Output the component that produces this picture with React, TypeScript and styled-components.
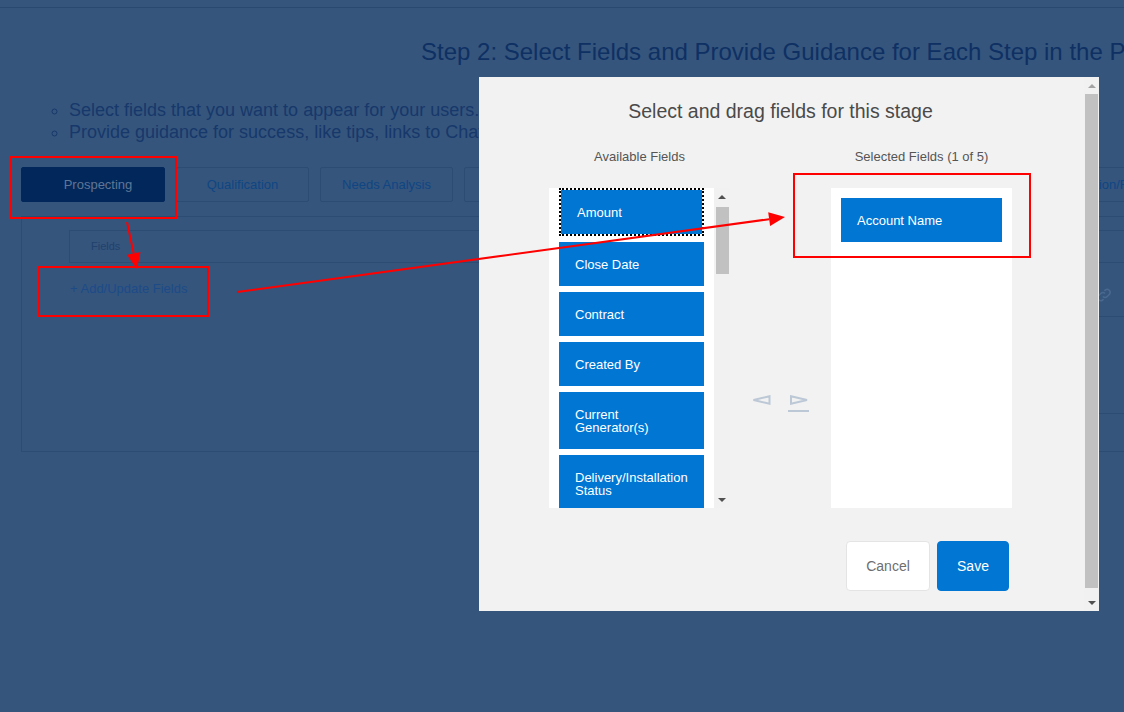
import React from 'react';
import styled, { createGlobalStyle } from 'styled-components';

const GlobalStyle = createGlobalStyle`
  html, body {
    margin: 0;
    padding: 0;
  }
  body {
    width: 1124px;
    height: 712px;
    overflow: hidden;
    background: #35557d;
    font-family: 'Liberation Sans', Arial, sans-serif;
  }
`;

const Page = styled.div`
  position: relative;
  width: 1124px;
  height: 712px;
  overflow: hidden;
  background: #35557d;
`;

const TopBar = styled.div`
  height: 7px;
  border-bottom: 1px solid #2a4970;
`;

const Heading = styled.h2`
  margin: 30px 0 0;
  padding-left: 421px;
  font-size: 24px;
  line-height: 28px;
  font-weight: normal;
  color: #0e3063;
  white-space: nowrap;
`;

const Bullets = styled.ul`
  margin: 33px 0 0;
  padding-left: 69px;
  list-style: circle;
  font-size: 18px;
  line-height: 22px;
  color: #17386a;
  white-space: nowrap;
`;

const Tabs = styled.div`
  display: flex;
  gap: 11px;
  margin-top: 24px;
  padding-left: 21px;
`;

const Tab = styled.div<{ $active?: boolean }>`
  flex: 0 0 auto;
  box-sizing: border-box;
  width: ${p => (p.$active ? 144 : 133)}px;
  height: 35px;
  padding-left: ${p => (p.$active ? 10 : 0)}px;
  display: flex;
  align-items: center;
  justify-content: center;
  border-radius: 2px;
  border: 1px solid ${p => (p.$active ? '#02285b' : '#2d4c74')};
  background: ${p => (p.$active ? '#02285b' : 'transparent')};
  color: ${p => (p.$active ? '#5f7696' : '#0f4683')};
  font-size: 13px;
  white-space: nowrap;
`;

const Panel = styled.div`
  box-sizing: border-box;
  width: 1240px;
  height: 236px;
  margin: 14px 0 0 21px;
  padding: 13px 0 0 47px;
  border: 1px solid #2d4c74;
`;

const FieldsHeader = styled.div`
  box-sizing: border-box;
  height: 33px;
  padding-left: 21px;
  border: 1px solid #2d4c74;
  font-size: 11px;
  line-height: 31px;
  color: #22416c;
`;

const FieldsRow = styled.div`
  display: flex;
`;

const AddLink = styled.div`
  flex: 0 0 1026px;
  margin-top: 18px;
  padding-left: 1px;
  font-size: 13px;
  line-height: 16px;
  color: #1c4b88;
`;

const SideColumn = styled.div`
  flex: 1;
  display: flex;
  flex-direction: column;
`;

const ToolRow = styled.div`
  height: 53px;
  border-bottom: 1px solid #2d4c74;
`;

const ToolButton = styled.div`
  width: 24px;
  height: 38px;
  margin-top: 13px;
  display: flex;
  align-items: center;
  color: #4a6890;
`;

const GuidanceBlock = styled.div`
  height: 96px;
  border-bottom: 1px solid #2d4c74;
`;

/* modal */

const Modal = styled.div`
  position: absolute;
  left: 479px;
  top: 77px;
  width: 620px;
  height: 534px;
  display: flex;
  background: #f2f2f2;
`;

const ModalBody = styled.div`
  flex: 1;
  display: flex;
  flex-direction: column;
  align-items: center;
  padding: 22px 2px 0 0;
`;

const ModalTitle = styled.div`
  font-size: 19.5px;
  line-height: 24px;
  color: #4a4a4a;
`;

const Columns = styled.div`
  display: flex;
  margin-top: 26px;
`;

const Column = styled.div`
  width: 181px;
  display: flex;
  flex-direction: column;
`;

const ColumnTitle = styled.div`
  height: 16px;
  margin-bottom: 23px;
  font-size: 13px;
  line-height: 16px;
  text-align: center;
  color: #555;
  white-space: nowrap;
`;

const ListFrame = styled.div`
  display: flex;
  height: 320px;
`;

const ListBox = styled.div<{ $pad: number }>`
  flex: 1;
  box-sizing: border-box;
  padding: ${p => p.$pad}px 10px 0;
  background: #fff;
  overflow: hidden;
`;

const FieldItem = styled.div<{ $focused?: boolean }>`
  box-sizing: border-box;
  width: 100%;
  margin-bottom: 6px;
  padding: 15.5px 10px 15.5px 16px;
  background: #0176d3;
  background-clip: padding-box;
  border: ${p => (p.$focused ? '2px dotted #000' : '0')};
  color: #fff;
  font-size: 13px;
  line-height: 13px;
`;

const Track = styled.div<{ $width: number }>`
  flex: 0 0 ${p => p.$width}px;
  display: flex;
  flex-direction: column;
  align-items: center;
  background: #f1f1f1;
`;

const ArrowCell = styled.div`
  height: 17px;
  width: 100%;
  display: flex;
  align-items: center;
  justify-content: center;
`;

const Triangle = styled.div<{ $down?: boolean; $color: string }>`
  width: 0;
  height: 0;
  border-left: 4px solid transparent;
  border-right: 4px solid transparent;
  ${p =>
    p.$down
      ? `border-top: 4px solid ${p.$color};`
      : `border-bottom: 4px solid ${p.$color};`}
`;

const Thumb = styled.div<{ $offset: number; $height: number }>`
  width: 13px;
  height: ${p => p.$height}px;
  margin-top: ${p => p.$offset}px;
  background: #c1c1c1;
`;

const Spacer = styled.div`
  flex: 1;
`;

const MoveControls = styled.div`
  width: 101px;
  display: flex;
  justify-content: center;
  align-items: flex-start;
  gap: 17px;
  padding-top: 246px;
`;

const Footer = styled.div`
  box-sizing: border-box;
  width: 463px;
  margin-top: 33px;
  padding-right: 3px;
  display: flex;
  justify-content: flex-end;
  gap: 7px;
`;

const Button = styled.button<{ $primary?: boolean }>`
  height: 50px;
  width: ${p => (p.$primary ? 72 : 84)}px;
  border-radius: 4px;
  border: 1px solid ${p => (p.$primary ? '#0176d3' : '#e4e4e4')};
  background: ${p => (p.$primary ? '#0176d3' : '#fff')};
  color: ${p => (p.$primary ? '#fff' : '#6e6e6e')};
  font-family: 'Liberation Sans', Arial, sans-serif;
  font-size: 14px;
  padding: 0;
`;

const Annotations = styled.svg`
  position: absolute;
  left: 0;
  top: 0;
  pointer-events: none;
`;

type ScrollbarProps = {
  width: number;
  thumbOffset: number;
  thumbHeight: number;
  upColor: string;
};

const Scrollbar = ({ width, thumbOffset, thumbHeight, upColor }: ScrollbarProps) => (
  <Track $width={width}>
    <ArrowCell>
      <Triangle $color={upColor} />
    </ArrowCell>
    <Thumb $offset={thumbOffset} $height={thumbHeight} />
    <Spacer />
    <ArrowCell>
      <Triangle $down $color="#505050" />
    </ArrowCell>
  </Track>
);

const RedArrow = ({ x1, y1, x2, y2 }: { x1: number; y1: number; x2: number; y2: number }) => {
  const dx = x2 - x1;
  const dy = y2 - y1;
  const d = Math.hypot(dx, dy);
  const ux = dx / d;
  const uy = dy / d;
  const bx = x2 - ux * 16;
  const by = y2 - uy * 16;
  const head = `${x2},${y2} ${bx - uy * 7},${by + ux * 7} ${bx + uy * 7},${by - ux * 7}`;
  return (
    <g>
      <line x1={x1} y1={y1} x2={bx} y2={by} stroke="#ff0000" strokeWidth={2} />
      <polygon points={head} fill="#ff0000" />
    </g>
  );
};

const stages = [
  'Qualification',
  'Needs Analysis',
  'Value Proposition',
  'Id. Decision Makers',
  'Perception Analysis',
  'Proposal/Price Quote',
  'Negotiation/Review',
];

const available = [
  'Amount',
  'Close Date',
  'Contract',
  'Created By',
  'Current Generator(s)',
  'Delivery/Installation Status',
  'Lead Source',
];

export default function App() {
  return (
    <Page>
      <GlobalStyle />
      <TopBar />
      <Heading>Step 2: Select Fields and Provide Guidance for Each Step in the Path</Heading>
      <Bullets>
        <li>Select fields that you want to appear for your users.</li>
        <li>Provide guidance for success, like tips, links to Chatter posts, policies, and more.</li>
      </Bullets>
      <Tabs>
        <Tab $active>Prospecting</Tab>
        {stages.map(s => (
          <Tab key={s}>{s}</Tab>
        ))}
      </Tabs>
      <Panel>
        <FieldsHeader>Fields</FieldsHeader>
        <FieldsRow>
          <AddLink>+ Add/Update Fields</AddLink>
          <SideColumn>
            <ToolRow>
              <ToolButton>
                <svg width="16" height="16" viewBox="0 0 16 16" fill="none" stroke="currentColor" strokeWidth="1.6">
                  <path d="M7 9.5a3 3 0 0 0 4.2 0l2.3-2.3a3 3 0 0 0-4.2-4.2L8.4 3.9" />
                  <path d="M9 6.5a3 3 0 0 0-4.2 0L2.5 8.8A3 3 0 0 0 6.7 13l.9-.9" />
                </svg>
              </ToolButton>
            </ToolRow>
            <GuidanceBlock />
          </SideColumn>
        </FieldsRow>
      </Panel>

      <Modal>
        <ModalBody>
          <ModalTitle>Select and drag fields for this stage</ModalTitle>
          <Columns>
            <Column>
              <ColumnTitle>Available Fields</ColumnTitle>
              <ListFrame>
                <ListBox $pad={0}>
                  {available.map((f, i) => (
                    <FieldItem key={f} $focused={i === 0}>
                      {f}
                    </FieldItem>
                  ))}
                </ListBox>
                <Scrollbar width={16} thumbOffset={2} thumbHeight={67} upColor="#505050" />
              </ListFrame>
            </Column>
            <MoveControls>
              <svg width="19" height="11" viewBox="0 0 19 11">
                <polygon points="1.5,5 17.5,1.2 17.5,8.8" fill="none" stroke="#bcc8d6" strokeWidth="2" />
              </svg>
              <svg width="21" height="17" viewBox="0 0 21 17">
                <polygon points="19,5 3,1.2 3,8.8" fill="none" stroke="#bcc8d6" strokeWidth="2" />
                <rect x="0" y="15" width="21" height="2" fill="#bcc8d6" />
              </svg>
            </MoveControls>
            <Column>
              <ColumnTitle>Selected Fields (1 of 5)</ColumnTitle>
              <ListFrame>
                <ListBox $pad={10}>
                  <FieldItem>Account Name</FieldItem>
                </ListBox>
              </ListFrame>
            </Column>
          </Columns>
          <Footer>
            <Button>Cancel</Button>
            <Button $primary>Save</Button>
          </Footer>
        </ModalBody>
        <Scrollbar width={15} thumbOffset={0} thumbHeight={494} upColor="#a3a3a3" />
      </Modal>

      <Annotations width="1124" height="712" viewBox="0 0 1124 712">
        <rect x="11" y="157" width="165" height="61" fill="none" stroke="#ff0000" strokeWidth="2" />
        <rect x="39" y="267" width="169" height="49" fill="none" stroke="#ff0000" strokeWidth="2" />
        <rect x="794" y="174" width="236" height="83" fill="none" stroke="#ff0000" strokeWidth="2" />
        <RedArrow x1={127} y1={222} x2={137} y2={269} />
        <RedArrow x1={237} y1={292} x2={785} y2={217} />
      </Annotations>
    </Page>
  );
}
